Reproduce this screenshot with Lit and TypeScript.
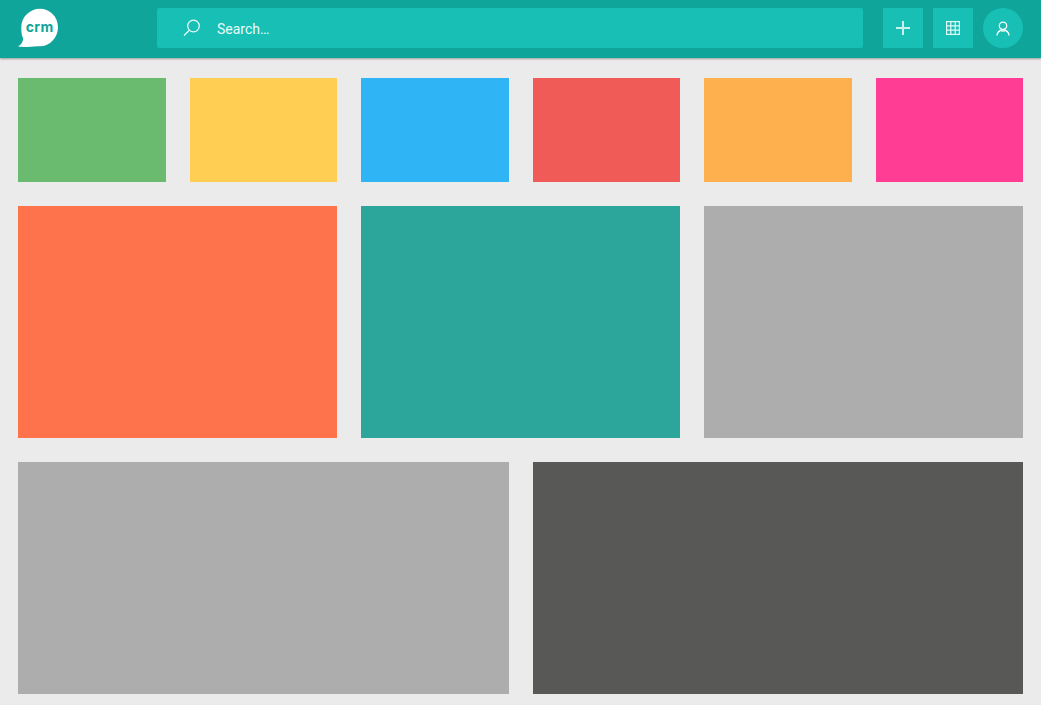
import { LitElement, html, css } from "lit";
import { customElement } from "lit/decorators.js";

const TILES = [
  ["s", "#6abb6f"], ["s", "#ffce52"], ["s", "#2fb5f6"], ["s", "#f15b57"], ["s", "#ffb04e"], ["s", "#ff3d94"],
  ["m", "#ff734c"], ["m", "#2ca69b"], ["m", "#adadad"],
  ["l", "#adadad"], ["l", "#585856"],
];

@customElement("app-root")
export class AppRoot extends LitElement {
  static styles = css`
    :host { display: block; height: 705px; overflow: hidden; background: #ebebeb; font-family: Roboto, sans-serif; }
    header {
      height: 58px; box-sizing: border-box; background: #10a59b; padding: 8px 18px 0 0;
      display: flex; gap: 10px; align-items: flex-start;
      box-shadow: 0 1px 2px rgba(0,0,0,.34);
      position: relative;
    }
    .logo { width: 157px; flex: none; margin-right: -10px; height: 40px; padding-left: 18px; box-sizing: border-box; }
    .logo svg { display: block; width: 41px; height: 40px; }
    .logo text { font: 700 14px Inter, Roboto, sans-serif; fill: #10a59b; letter-spacing: .4px; }
    .search {
      flex: 1; height: 40px; margin-right: 10px; background: #18bfb5; border-radius: 2px;
      display: flex; align-items: center; padding-left: 26px; gap: 16px; color: #e9fbf9; font-size: 14px;
    }
    .search span { padding-top: 2px; }
    .btn { width: 40px; height: 40px; flex: none; background: #18bfb5; display: flex; align-items: center; justify-content: center; }
    .btn.round { border-radius: 50%; }
    svg.i { display: block; fill: none; }
    .search svg { stroke: #e6fbf8; stroke-width: 1.3; }
    .plus { stroke: #c8f1ed; stroke-width: 2; }
    .grid { stroke: #e2fbf8; stroke-width: 1.2; }
    .user { stroke: #fff; stroke-width: 1.3; }
    main {
      padding: 20px 18px 0; display: grid; grid-template-columns: repeat(12, 1fr);
      grid-template-rows: 104px 232px 232px; gap: 24px;
    }
    .s { grid-column: span 2; }
    .m { grid-column: span 4; }
    .l { grid-column: span 6; }
  `;

  render() {
    return html`
      <header>
        <div class="logo">
          <svg viewBox="0 0 41 40">
            <path fill="#fff" d="M22 .8C32.200 .8 40 9 40 19.200S32 38.300 22 38.300C18.500 38.300 14 38.800 9.500 38.900 6 39 2.500 39 0 38.600 3 36.800 5 34 5.200 30.500 3.500 27.500 3.300 23.500 3.300 19.200 3.300 9 11.800 .8 22 .8Z"/>
            <text x="21.700" y="24" text-anchor="middle">crm</text>
          </svg>
        </div>
        <div class="search">
          <svg class="i" width="18" height="18" viewBox="0 0 18 18">
            <circle cx="10.500" cy="7" r="5.800"/>
            <path d="M6.300 11.300 1 16.500"/>
          </svg>
          <span>Search…</span>
        </div>
        <div class="btn">
          <svg class="i plus" width="14" height="14" viewBox="0 0 14 14">
            <path d="M7 0v14M0 7h14"/>
          </svg>
        </div>
        <div class="btn">
          <svg class="i grid" width="14" height="14" viewBox="0 0 14 14">
            <rect x=".6" y=".6" width="12.800" height="12.800"/>
            <path d="M4.800 .6v12.800M9.200 .6v12.800M.6 4.800h12.800M.6 9.200h12.800"/>
          </svg>
        </div>
        <div class="btn round">
          <svg class="i user" width="14" height="15" viewBox="0 0 14 15">
            <circle cx="7" cy="4.800" r="3.700"/>
            <path d="M1 14.500C1 11.500 2.500 10.300 4.500 9.300 6 10.200 8 10.200 9.500 9.300 11.500 10.300 13 11.500 13 14.500"/>
          </svg>
        </div>
      </header>
      <main>
        ${TILES.map(([k, c]) => html`<div class=${k} style="background:${c}"></div>`)}
      </main>
    `;
  }
}
